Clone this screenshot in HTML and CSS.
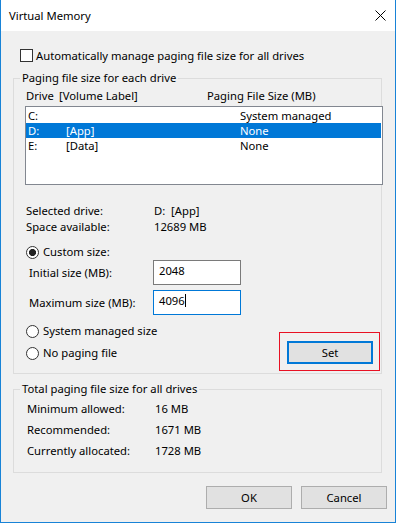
FILE: index.html
```html
<!DOCTYPE html>
<html lang="en">
<head>
    <meta charset="UTF-8">
    <title>Virtual Memory</title>
    <link rel="stylesheet" href="styles.css">
</head>
<body>
    <div class="window">
        <div class="titlebar">
            <span class="title">Virtual Memory</span>
            <svg class="close" width="11" height="11" viewBox="0 0 11 11">
                <path d="M0.5 0.5 L10.5 10.5 M10.5 0.5 L0.5 10.5" stroke="#000" stroke-width="1" fill="none"/>
            </svg>
        </div>

        <div class="dialog-body">
            <div class="check-row">
                <span class="checkbox"></span>
                <span>Automatically manage paging file size for all drives</span>
            </div>

            <fieldset class="group group-drives">
                <legend>Paging file size for each drive</legend>

                <div class="list-head">
                    <span>Drive</span>
                    <span>[Volume Label]</span>
                    <span>Paging File Size (MB)</span>
                </div>

                <div class="listbox">
                    <div class="list-row"><span>C:</span><span></span><span>System managed</span></div>
                    <div class="list-row selected"><span>D:</span><span>[App]</span><span>None</span></div>
                    <div class="list-row"><span>E:</span><span>[Data]</span><span>None</span></div>
                </div>

                <div class="info">
                    <span>Selected drive:</span><span>D:&nbsp; [App]</span>
                    <span>Space available:</span><span>12689 MB</span>
                </div>

                <div class="radio-row radio-custom">
                    <span class="radio checked"></span>
                    <span>Custom size:</span>
                </div>

                <div class="field-row">
                    <span class="field-label">Initial size (MB):</span>
                    <div class="textbox">2048</div>
                </div>
                <div class="field-row field-max">
                    <span class="field-label">Maximum size (MB):</span>
                    <div class="textbox focused">4096<span class="caret"></span></div>
                </div>

                <div class="bottom-row">
                    <div class="radios">
                        <div class="radio-row">
                            <span class="radio"></span>
                            <span>System managed size</span>
                        </div>
                        <div class="radio-row">
                            <span class="radio"></span>
                            <span>No paging file</span>
                        </div>
                    </div>
                    <div class="highlight">
                        <button class="btn btn-set">Set</button>
                    </div>
                </div>
            </fieldset>

            <fieldset class="group group-total">
                <legend>Total paging file size for all drives</legend>
                <div class="totals">
                    <span>Minimum allowed:</span><span>16 MB</span>
                    <span>Recommended:</span><span>1671 MB</span>
                    <span>Currently allocated:</span><span>1728 MB</span>
                </div>
            </fieldset>

            <div class="actions">
                <button class="btn">OK</button>
                <button class="btn">Cancel</button>
            </div>
        </div>
    </div>
</body>
</html>
```

FILE: styles.css
```css
:root {
    --accent: #0078d7;
    --frame: #1883d7;
    --panel: #f0f0f0;
    --group-line: #dcdcdc;
}

body {
    margin: 0;
    font-family: "Noto Sans", "Liberation Sans", sans-serif;
    font-size: 11.25px;
    color: #000;
    background: var(--panel);
}

.window {
    width: 396px;
    height: 523px;
    box-sizing: border-box;
    border: 1px solid var(--frame);
    border-top: none;
    background: var(--panel);
}

.titlebar {
    height: 31px;
    background: #fff;
    display: flex;
    align-items: center;
    justify-content: space-between;
    padding: 0 9px 0 8px;
}

.title {
    line-height: 16px;
    padding-top: 1px;
}

.close {
    display: block;
}

.dialog-body {
    padding-left: 12px;
}

/* checkbox + radios */
.check-row {
    display: flex;
    align-items: center;
    gap: 3px;
    height: 15px;
    margin: 17px 0 0 7px;
    line-height: 15px;
}

.checkbox {
    width: 13px;
    height: 13px;
    box-sizing: border-box;
    border: 1px solid #333;
    background: #fff;
}

.radio-row {
    display: flex;
    align-items: center;
    gap: 4px;
    height: 16px;
    line-height: 16px;
}

.radio {
    width: 13px;
    height: 13px;
    box-sizing: border-box;
    border: 1px solid #333;
    border-radius: 50%;
    background: #fff;
}

.radio.checked {
    background: radial-gradient(circle, #222 0 3.3px, #fff 3.8px);
}

/* group boxes */
.group {
    width: 369px;
    box-sizing: border-box;
    margin: 7px 0 0 0;
    padding: 0 1px 2px 0;
    border: 1px solid var(--group-line);
    min-width: 0;
}

.group legend {
    margin-left: 6px;
    padding: 0 2px;
    line-height: 16px;
}

.list-head {
    display: grid;
    grid-template-columns: 33px 148px auto;
    margin: 2px 0 0 12px;
    line-height: 15px;
}

.listbox {
    width: 358px;
    height: 79px;
    box-sizing: border-box;
    margin: 3px 0 0 11px;
    padding: 1px 1px 0 0;
    border: 1px solid #828790;
    background: #fff;
}

.list-row {
    display: grid;
    grid-template-columns: 38px 174px auto;
    padding-left: 2px;
    height: 15px;
    line-height: 15px;
}

.list-row.selected {
    background: var(--accent);
    color: #fff;
}

.info {
    display: grid;
    grid-template-columns: 128px auto;
    margin: 18px 0 0 12px;
    line-height: 16px;
}

.radio-custom {
    margin: 9px 0 0 12px;
}

.field-row {
    display: flex;
    align-items: center;
    height: 25px;
    margin-left: 15px;
}

.field-max {
    margin-top: 5px;
}

.field-label {
    width: 124px;
}

.textbox {
    width: 88px;
    height: 25px;
    box-sizing: border-box;
    border: 1px solid #7a7a7a;
    background: #fff;
    padding-left: 5px;
    line-height: 20px;
}

.textbox.focused {
    border-color: var(--accent);
}

.caret {
    display: inline-block;
    width: 1px;
    height: 13px;
    background: #000;
    vertical-align: -2px;
}

.bottom-row {
    display: flex;
    justify-content: space-between;
    margin-top: 8px;
}

.radios {
    display: flex;
    flex-direction: column;
    gap: 6px;
    margin-left: 12px;
}

.highlight {
    margin-top: 9px;
    padding: 8px 6px 6px 7px;
    border: 1px solid #e81123;
}

.btn {
    display: block;
    width: 86px;
    height: 23px;
    box-sizing: border-box;
    padding: 0;
    border: 1px solid #adadad;
    background: #e1e1e1;
    font: inherit;
    color: #000;
}

.btn-set {
    border: 2px solid var(--accent);
}

.group-total {
    padding-bottom: 13px;
}

.totals {
    display: grid;
    grid-template-columns: 128px auto;
    row-gap: 5px;
    margin: 4px 0 0 13px;
    line-height: 16px;
}

.actions {
    display: flex;
    justify-content: flex-end;
    gap: 9px;
    margin-top: 13px;
    padding-right: 8px;
}
```
